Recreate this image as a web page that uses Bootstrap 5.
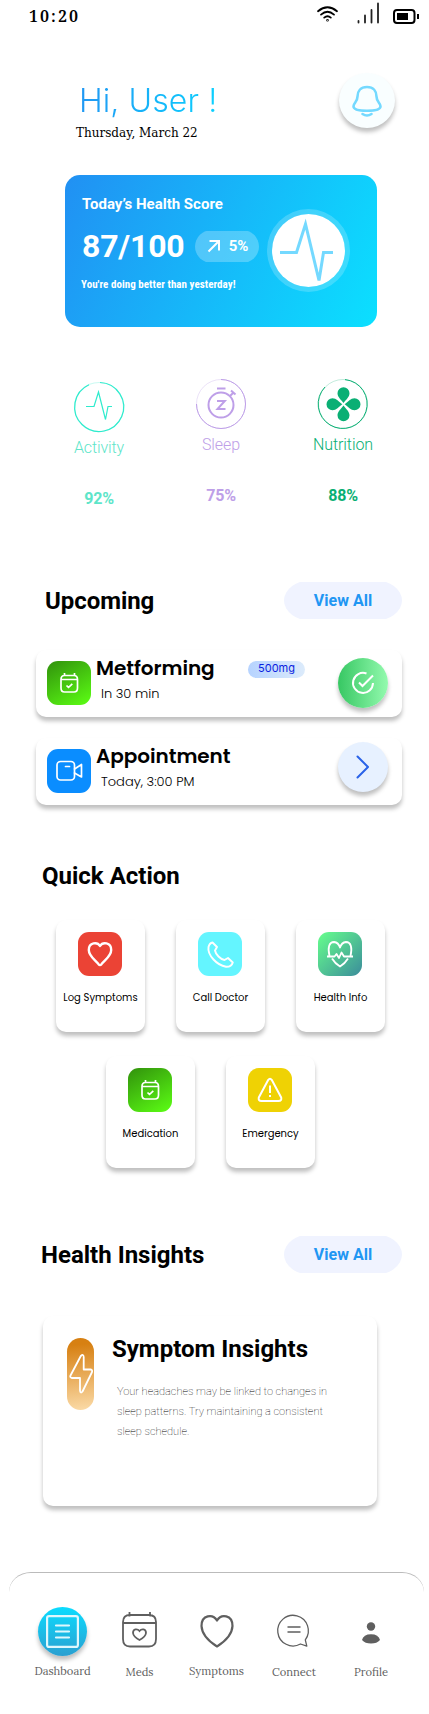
<!DOCTYPE html>
<html lang="en">
<head>
<meta charset="utf-8">
<meta name="viewport" content="width=device-width, initial-scale=1">
<title>Health Dashboard</title>
<link rel="stylesheet" href="https://cdn.jsdelivr.net/npm/bootstrap@5.3.0/dist/css/bootstrap.min.css">
<style>
  body { font-family: Roboto, "Liberation Sans", sans-serif; color: #000; background: #fff; line-height: 1; overflow-x: hidden; }
  svg { display: block; flex: none; overflow: visible; }
  .app { width: 429px; height: 1714px; }
  .serif { font-family: "Noto Serif", "DejaVu Serif", serif; }
  .pop { font-family: Poppins, Inter, sans-serif; }
  .line { line-height: 1; white-space: nowrap; }

  .status-bar { height: 73px; padding: 2px 9px 0 29px; }
  .clock { font-size: 16px; font-weight: 600; letter-spacing: 2.05px; margin-top: 6px; }
  .greeting { height: 102px; padding: 0 34px 0 76px; }
  .hello { font: 300 32px/40px Inter, sans-serif; letter-spacing: .1px; margin: 8px 0 0 3px; width: 142px;
    background: linear-gradient(100deg, #2196f3, #0bd3ff); -webkit-background-clip: text; background-clip: text; color: transparent; }
  .today { font-family: "DejaVu Serif", serif; font-size: 12px; margin-top: 6px; }
  .round-btn { border-radius: 50%; border: 0; padding: 0; display: flex; align-items: center; justify-content: center; flex: none; box-shadow: 0 4px 4px rgba(0,0,0,.25); }
  .bell { width: 56px; height: 55px; background: #f9feff; }

  .score { width: 312px; height: 152px; margin-left: 65px; border-radius: 15px; color: #fff; padding: 22px 27px 0 17px;
    background: linear-gradient(116deg, #2190f3, #0be0ff); }
  .score-num { font-size: 32px; font-weight: 700; letter-spacing: -.2px; }
  .cut-pill { position: relative; overflow: hidden; z-index: 0; flex: none; display: flex; align-items: center; justify-content: center; text-decoration: none; }
  .cut-pill::before { content: ""; position: absolute; inset: -2px 0; z-index: -1; background: var(--fill); border-radius: 28px / 50%; }
  .trend { width: 64px; height: 31px; --fill: rgba(255,255,255,.25); }
  .trend::before { border-radius: 17px / 50%; inset: -1px 0; }
  .ring { width: 83px; height: 83px; border-radius: 50%; border: 5px solid rgba(255,255,255,.2); background: #fff; background-clip: padding-box; flex: none; }

  .metrics { height: 255px; padding: 52px 25px 0 38px; }
  .metric { width: 122px; }
  .metric-name { font-size: 16px; font-weight: 300; margin-top: 8px; letter-spacing: -.1px; }
  .metric-pct { font-size: 16px; font-weight: 700; letter-spacing: -.2px; margin-top: 35px; }

  .sec-title { font-size: 24px; font-weight: 700; margin: 0; }
  .view-all { width: 118px; height: 37px; --fill: #f0f3ff; color: #2196f3; font-size: 16px; font-weight: 700; }
  .sheet { background: #fff; border-radius: 10px; box-shadow: 0 4px 4px rgba(0,0,0,.25); }
  .task { width: 366px; height: 67px; margin-left: 36px; padding: 0 14px 0 11px; }
  .tile { width: 44px; height: 44px; border-radius: 11px; display: flex; align-items: center; justify-content: center; flex: none; }
  .g-green { background: linear-gradient(150deg, #31910c, #5cff14); }
  .task-name { font-size: 20px; font-weight: 600; letter-spacing: -.05px; }
  .task-when { font-size: 13px; font-weight: 300; margin: 9px 0 0 5px; }
  .dose { width: 57px; height: 17px; border-radius: 9px; background: linear-gradient(90deg, #b6d3ff, #dcebfb); color: #0a1fe0; font: 11px/15px Inter, sans-serif; }
  .act { width: 50px; height: 50px; }
  .quick { width: 89px; height: 112px; padding-top: 12px; }
  .quick .tile { margin-right: 1px; }
  .quick-name { font-size: 10px; margin-top: 17px; }

  .insight { width: 334px; height: 190px; margin-left: 43px; padding: 22px 20px 0 24px; }
  .bolt { width: 27px; height: 72px; border-radius: 14px; background: linear-gradient(175deg, #d78012 10%, #fbdba8); flex: none; display: flex; align-items: center; justify-content: center; }
  .insight-text { font-size: 11px; font-weight: 100; line-height: 20px; width: 216px; margin: 21px 0 0 5px; color: #000; }

  .tabs { position: relative; height: 141px; margin: 0 5px 0 9px; padding-top: 35px; color: #5f5f5f; }
  .tabs::before { content: ""; position: absolute; inset: 0 0 auto 0; height: 22px; border-top: 1px solid #bbb; border-radius: 22px 22px 0 0 / 20px 20px 0 0; }
  .tab-item { font-family: Lora, "Playfair Display", "Liberation Serif", serif; font-size: 11.2px; }
  .tab-pic { height: 49px; margin-top: -1px; display: flex; align-items: center; justify-content: center; }
  .dash { width: 49px; height: 49px; background: linear-gradient(#0bdcff, #2b9fd0); }
</style>
</head>
<body>
<main class="app">

  <header class="status-bar d-flex justify-content-between align-items-start">
    <div class="clock serif line">10:20</div>
    <div class="d-flex align-items-start">
      <svg width="21" height="16" viewBox="0 0 21 16" style="margin:4px 19px 0 0" fill="none" stroke="#000" stroke-width="1.8" stroke-linecap="round"><path d="M1 5.2Q10.500-2.600 20 5.200M4 8.600Q10.500 3 17 8.600M7.200 11.600Q10.500 8.800 13.800 11.600"/><circle cx="10.500" cy="14.200" r=".4"/></svg>
      <svg width="23" height="22" viewBox="0 0 23 22" style="margin-right:13px" stroke="#222" stroke-width="1.800" stroke-linecap="round"><path d="M1.500 19v1.500M8 13.500v7M14.500 8v12.500M21 1.500v19"/></svg>
      <svg width="27" height="16" viewBox="0 0 27 16" style="margin-top:6px"><rect x="1" y="2" width="20.500" height="13" rx="3" fill="none" stroke="#000" stroke-width="2"/><rect x="4" y="5" width="11" height="7" fill="#000"/><path d="M25 6v5" stroke="#000" stroke-width="2"/></svg>
    </div>
  </header>

  <section class="greeting d-flex justify-content-between align-items-start">
    <div>
      <div class="hello text-nowrap">Hi, User !</div>
      <div class="today line">Thursday, March 22</div>
    </div>
    <button class="round-btn bell" aria-label="Notifications">
      <svg width="30" height="32" viewBox="0 0 30 32" fill="none" stroke="#74d9ff" stroke-width="2.600" stroke-linecap="round" stroke-linejoin="round"><path d="M15 2C8.500 2 5.500 6.500 5.500 11.500C5.500 17 1.500 18 1.500 21.200C1.500 24.500 8 25.800 15 25.800S28.500 24.500 28.500 21.200C28.500 18 24.500 17 24.500 11.500C24.500 6.500 21.500 2 15 2ZM10.500 29Q15 32 19.500 29"/></svg>
    </button>
  </section>

  <section class="score d-flex justify-content-between">
    <div>
      <div class="line fw-bold" style="font-size:15px">Today’s Health Score</div>
      <div class="d-flex align-items-center" style="margin-top:18px;gap:11px">
        <div class="score-num line">87/100</div>
        <div class="cut-pill trend gap-2">
          <svg width="14" height="14" viewBox="0 0 14 14" fill="none" stroke="#fff" stroke-width="2"><path d="M1.500 12.500L12 2M2.500 2H12V11.500"/></svg>
          <span class="line fw-bold" style="font-size:15px">5%</span>
        </div>
      </div>
      <div class="line fw-bold" style="font-family:'Roboto Condensed',Roboto,sans-serif;font-size:11px;letter-spacing:.04px;margin:17px 0 0 -1px">You're doing better than yesterday!</div>
    </div>
    <div class="ring" style="margin-top:12px">
      <svg width="73" height="73" viewBox="0 0 73 73" fill="none" stroke="#74d9ff" stroke-width="3"><path d="M8 38.500H24.500L33.500 10L47 66.500L51.500 38.500H61"/></svg>
    </div>
  </section>

  <section class="metrics d-flex">
    <div class="metric d-flex flex-column align-items-center" style="color:#5ee5c9;padding-top:3px">
      <svg width="50" height="50" viewBox="0 0 50 50" fill="none" stroke="#2eebcd" stroke-width="1.200"><circle cx="25" cy="25" r="24.500" stroke-opacity=".25"/><path d="M26 .5A24.500 24.500 0 1 1 15 2.700M12 24.500H20L24.500 10L31.500 37.500L34 24.500H38"/></svg>
      <div class="metric-name line">Activity</div><div class="metric-pct line">92%</div>
    </div>
    <div class="metric d-flex flex-column align-items-center" style="color:#be9fe8">
      <svg width="50" height="50" viewBox="0 0 50 50" fill="none" stroke="#be9fe8"><circle cx="25" cy="25" r="24.500" stroke-opacity=".3"/><path d="M25 .5A24.500 24.500 0 1 1 .5 25"/><g stroke-width="2"><circle cx="25" cy="26" r="12.500"/><path d="M21 9.500H29.500M34 17L37.500 13.500M35 11.500L39.500 15.500M21 22H28.800L21.500 30H29.500"/></g></svg>
      <div class="metric-name line">Sleep</div><div class="metric-pct line">75%</div>
    </div>
    <div class="metric d-flex flex-column align-items-center" style="color:#0aaf74">
      <svg width="50" height="50" viewBox="0 0 50 50"><g fill="none" stroke="#0aaf74"><circle cx="25" cy="25" r="24.500" stroke-opacity=".25"/><path d="M27 .6A24.500 24.500 0 1 1 7 8"/></g><g fill="#0aaf74"><path id="petal" d="M25.500 24C23 20.500 19.500 18 19.500 14.200A6 6 0 0 1 31.500 14.200C31.500 18 28 20.500 25.500 24Z"/><use href="#petal" transform="rotate(90 25.500 25.200)"/><use href="#petal" transform="rotate(180 25.500 25.200)"/><use href="#petal" transform="rotate(270 25.500 25.200)"/></g></svg>
      <div class="metric-name line">Nutrition</div><div class="metric-pct line">88%</div>
    </div>
  </section>

  <section style="height:283px">
    <div class="d-flex justify-content-between align-items-center" style="padding:0 27px 0 45px">
      <h2 class="sec-title line" style="letter-spacing:-.05px">Upcoming</h2>
      <a class="cut-pill view-all line" href="#">View All</a>
    </div>
    <div class="sheet task d-flex" style="margin-top:31px">
      <div class="tile g-green" style="margin-top:11px">
        <svg width="20" height="22" viewBox="0 0 20 22" fill="none" stroke="#fff" stroke-width="1.700" stroke-linejoin="round"><path d="M5.500 3.500H15Q18.500 3.500 18.500 7.500V16Q18.500 20 15 20H5.500Q2 20 2 16V7.500Q2 3.500 5.500 3.500ZM2 7.500H18.500M5.500 1V4M15.500 1V4M7.500 13.500L9.500 15.500L13.300 11.800"/></svg>
      </div>
      <div class="pop" style="margin:8px 0 0 5px">
        <div class="task-name line">Metforming</div>
        <div class="task-when line">In 30 min</div>
      </div>
      <div class="ms-auto d-flex align-items-start">
        <div class="dose text-center" style="margin:11px 33px 0 0">500mg</div>
        <button class="round-btn act" aria-label="Mark as taken" style="margin-top:8px;background:linear-gradient(90deg,#37c763,#93faae)">
          <svg width="24" height="24" viewBox="0 0 24 24" fill="none" stroke="#fff" stroke-width="2"><path d="M15.500 2.500A10 10 0 1 0 22 12M8 11.500L11.500 15L22 4.500"/></svg>
        </button>
      </div>
    </div>
    <div class="sheet task d-flex" style="margin-top:21px">
      <div class="tile" style="margin-top:11px;background:#0a8dff">
        <svg width="27" height="22" viewBox="0 0 27 22" fill="none" stroke="#fff" stroke-width="1.700" stroke-linejoin="round" stroke-linecap="round"><rect x="1" y="1.500" width="17.500" height="18.500" rx="3.500"/><path d="M18.500 9L25.500 4.500V17L18.500 13M9.500 6.500H13.500"/></svg>
      </div>
      <div class="pop" style="margin:8px 0 0 5px">
        <div class="task-name line">Appointment</div>
        <div class="task-when line">Today, 3:00 PM</div>
      </div>
      <button class="round-btn act ms-auto" aria-label="Open appointment" style="margin-top:4px;background:#e7f1ff">
        <svg width="14" height="24" viewBox="0 0 14 24" fill="none" stroke="#2a63e8" stroke-width="2" stroke-linecap="round" stroke-linejoin="round"><path d="M1.500 1.500L12 12L1.500 22.500"/></svg>
      </button>
    </div>
  </section>

  <section style="height:372px;padding-left:42px">
    <h2 class="sec-title line" style="margin-top:-1px;margin-bottom:32px">Quick Action</h2>
    <div class="d-flex" style="gap:31px;padding-left:14px">
      <div class="sheet quick d-flex flex-column align-items-center">
        <div class="tile" style="background:#eb4335"><svg width="26" height="26" viewBox="0 0 26 26" fill="none" stroke="#fff" stroke-width="2.400" stroke-linejoin="round"><path d="M13 5C10.500.800 1.800 1 1.800 9C1.800 15.500 9 19.500 11.500 23.200Q13 25 14.500 23.200C17 19.500 24.200 15.500 24.200 9C24.200 1 15.500.800 13 5Z"/></svg></div>
        <div class="quick-name pop line">Log Symptoms</div>
      </div>
      <div class="sheet quick d-flex flex-column align-items-center">
        <div class="tile" style="background:#64f5ff"><svg width="27" height="27" viewBox="0 0 27 27" fill="none" stroke="#fff" stroke-width="1.900" stroke-linejoin="round"><path d="M5.500 1.500L10 6L8 9.500Q8.500 12.500 11.500 15.500T17.500 19L21 17L25.800 21.500Q24.500 26 19 25.800Q12 24.500 6.500 18.500Q.5 12 1.500 6Q2.500 2 5.500 1.500Z"/></svg></div>
        <div class="quick-name pop line">Call Doctor</div>
      </div>
      <div class="sheet quick d-flex flex-column align-items-center">
        <div class="tile" style="background:linear-gradient(135deg,#66ff8c,#3b8c9b)"><svg width="26" height="28" viewBox="0 0 26 28" fill="none" stroke="#fff" stroke-width="1.800" stroke-linejoin="round"><path d="M2.500 16C.500 8 2 2 7 2Q11.500 2.500 13 7.500Q14.500 2.500 19 2C24 2 25.500 8 23.500 16M5 18.500Q8 23.500 13 26.500Q18 23.500 21 18.500M0 16.500H7.500L9.500 14L12 18L14.500 12.500L17 16.500H26"/></svg></div>
        <div class="quick-name pop line">Health Info</div>
      </div>
    </div>
    <div class="d-flex" style="gap:31px;padding-left:64px;margin-top:24px">
      <div class="sheet quick d-flex flex-column align-items-center">
        <div class="tile g-green"><svg width="20" height="22" viewBox="0 0 20 22" fill="none" stroke="#fff" stroke-width="1.700" stroke-linejoin="round"><path d="M5.500 3.500H15Q18.500 3.500 18.500 7.500V16Q18.500 20 15 20H5.500Q2 20 2 16V7.500Q2 3.500 5.500 3.500ZM2 7.500H18.500M5.500 1V4M15.500 1V4M7.500 13.500L9.500 15.500L13.300 11.800"/></svg></div>
        <div class="quick-name pop line">Medication</div>
      </div>
      <div class="sheet quick d-flex flex-column align-items-center">
        <div class="tile" style="background:#efd204"><svg width="26" height="26" viewBox="0 0 26 26" fill="none" stroke="#fff" stroke-width="2" stroke-linejoin="round"><path d="M11.300 2.800Q13 .500 14.700 2.800L24.200 20.500Q25 24 21.500 24H4.500Q1 24 1.800 20.500ZM13 8.500V16M13 18V20"/></svg></div>
        <div class="quick-name pop line">Emergency</div>
      </div>
    </div>
  </section>

  <section style="height:336px">
    <div class="d-flex justify-content-between align-items-center" style="padding:0 27px 0 41px;margin-bottom:43px">
      <h2 class="sec-title line">Health Insights</h2>
      <a class="cut-pill view-all line" href="#">View All</a>
    </div>
    <div class="sheet insight d-flex">
      <div class="bolt"><svg width="24" height="40" viewBox="0 0 24 40" fill="none" stroke="#fff" stroke-width="1.800" stroke-linejoin="round"><path d="M11.800 2Q14.500-.5 14.700 3V15.500H21.500Q24 16 22.800 18.500L13.500 37.500Q11.500 40 11 36.500V24H3Q.5 23.500 1.500 21.500Z"/></svg></div>
      <div style="margin:-1px 0 0 18px">
        <h3 class="sec-title line">Symptom Insights</h3>
        <p class="insight-text">Your headaches may be linked to changes in sleep patterns. Try maintaining a consistent sleep schedule.</p>
      </div>
    </div>
  </section>

  <nav class="tabs d-flex">
    <div class="tab-item d-flex flex-column align-items-center" style="width:107px">
      <div class="round-btn dash"><svg width="33" height="33" viewBox="0 0 33 33" fill="none" stroke="#dff7fd" stroke-width="2.200"><rect x="1.100" y="1.100" width="30.800" height="30.800" rx="2"/><path d="M10 10.500H23M10 16.500H23M10 22.500H23" stroke-linecap="round"/></svg></div>
      <span class="line" style="margin-top:10px">Dashboard</span>
    </div>
    <div class="tab-item d-flex flex-column align-items-center" style="width:47px">
      <div class="tab-pic"><svg width="35" height="37" viewBox="0 0 35 37" fill="none" stroke="#5f5f5f" stroke-width="1.800" style="margin-top:-3px"><path d="M8 4H27Q34 4 34 11V28Q34 35.500 27 35.500H8Q1 35.500 1 28V11Q1 4 8 4ZM1 12H34M7.500 1V5.500M28 1V5.500"/><path d="M17.500 20C15.500 17.500 11 17.500 11 22Q11.500 26 17.500 29Q23.500 26 24 22C24 17.500 19.500 17.500 17.500 20Z"/></svg></div>
      <span class="line" style="margin-top:12px">Meds</span>
    </div>
    <div class="tab-item d-flex flex-column align-items-center" style="width:107px">
      <div class="tab-pic"><svg width="34" height="34" viewBox="0 0 34 34" fill="none" stroke="#5f5f5f" stroke-width="2.200" stroke-linejoin="round"><path d="M17 6.500C13-.5 1.500.500 1.500 12Q2 23 17 32.500Q32 23 32.500 12C32.500.500 21 -.5 17 6.500Z"/></svg></div>
      <span class="line" style="margin-top:11px">Symptoms</span>
    </div>
    <div class="tab-item d-flex flex-column align-items-center" style="width:48px">
      <div class="tab-pic"><svg width="32" height="33" viewBox="0 0 32 33" fill="none" stroke="#5f5f5f" stroke-width="1.300" stroke-linejoin="round"><path d="M22.500 30A15.300 15.300 0 1 1 27.300 25.800L28.800 32.200ZM9.500 13H22.500M9.500 18H22.500"/></svg></div>
      <span class="line" style="margin-top:12px">Connect</span>
    </div>
    <div class="tab-item d-flex flex-column align-items-center" style="width:106px">
      <div class="tab-pic"><svg width="18" height="22" viewBox="0 0 18 22" fill="#5f5f5f" style="margin-top:4px"><circle cx="9" cy="4.500" r="4.200"/><path d="M0 18Q1.500 12.300 9 12.300T18 18Q15 21.500 9 21.500T0 18Z"/></svg></div>
      <span class="line" style="margin-top:12px">Profile</span>
    </div>
  </nav>
</main>
<script src="https://cdn.jsdelivr.net/npm/bootstrap@5.3.0/dist/js/bootstrap.bundle.min.js"></script>
</body>
</html>
